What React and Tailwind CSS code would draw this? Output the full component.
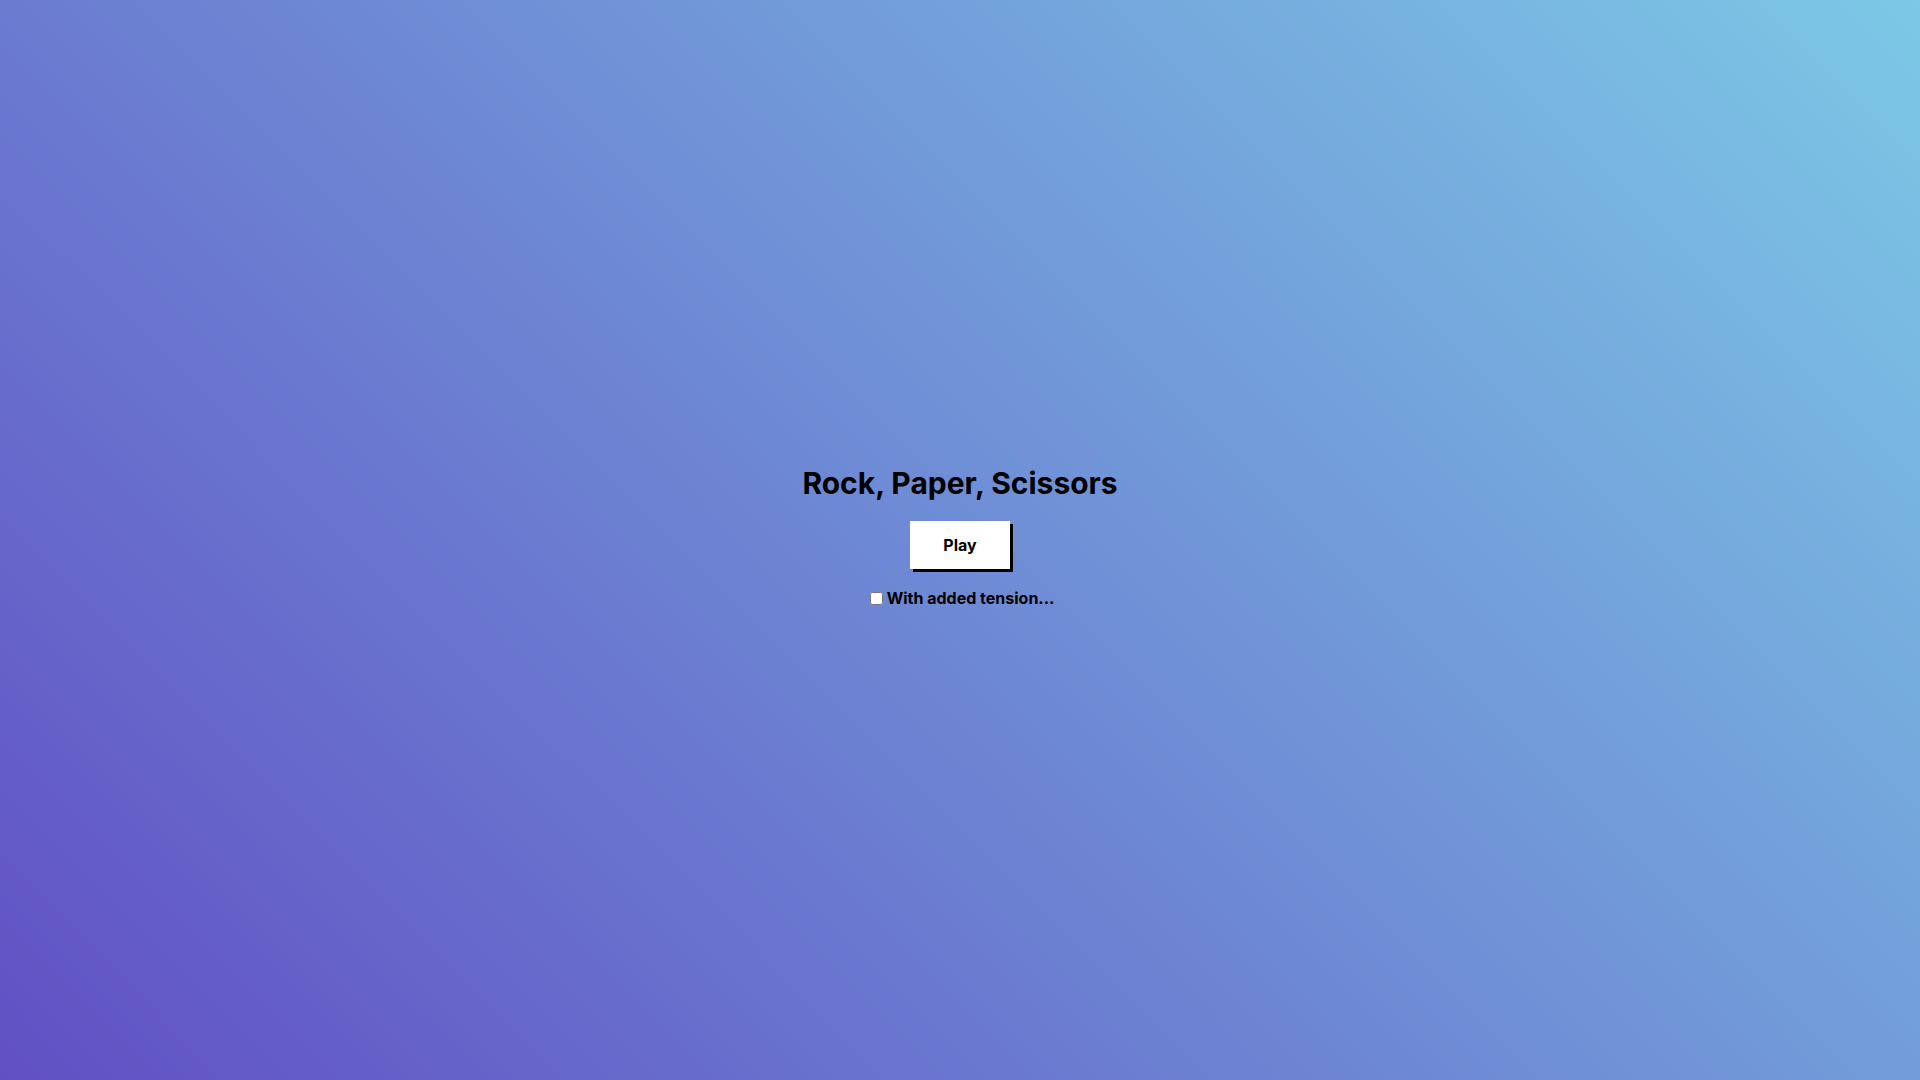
import { useState } from 'react';

export default function App() {
  const [tension, setTension] = useState(false);

  return (
    <div
      className="flex min-h-screen w-full flex-col items-center justify-center bg-[linear-gradient(45deg,#6150c4,#7cc8e6)] pb-2 text-black"
      style={{ fontFamily: 'Inter, "Liberation Sans", sans-serif' }}
    >
      <h1 className="text-[30px] font-bold leading-[36px]">Rock, Paper, Scissors</h1>

      <button className="mt-5 h-12 w-[100px] bg-white text-base font-bold shadow-[3px_3px_0_#000]">
        Play
      </button>

      {/* Tension toggle */}
      <label className="mt-5 ml-1 flex items-center text-base font-bold leading-[19px]">
        <input
          type="checkbox"
          checked={tension}
          onChange={(e) => setTension(e.target.checked)}
          className="mr-1 h-[13px] w-[13px]"
        />
        With added tension...
      </label>
    </div>
  );
}
